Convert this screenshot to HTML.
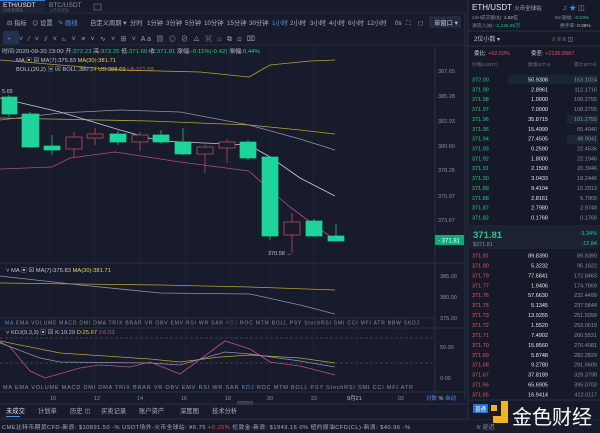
<!DOCTYPE html>
<html><head><meta charset="utf-8"><style>
html,body{margin:0;padding:0;background:#171b2b;width:600px;height:433px;overflow:hidden}
svg{display:block}
text{font-family:"Liberation Sans","Noto Sans CJK SC",sans-serif}
</style></head><body>
<svg width="600" height="433" viewBox="0 0 600 433" xmlns="http://www.w3.org/2000/svg">
<rect width="600" height="433" fill="#171b2b"/>
<rect x="0" y="0" width="45" height="12" fill="#1d2234"/>
<rect x="0" y="0" width="45" height="1" fill="#3b7de0"/>
<text x="3" y="7" font-size="6.5" fill="#e6e8ee">ETH/USDT</text>
<text x="3" y="11.5" font-size="4" fill="#6c7285">火币全球站</text>
<text x="49" y="7" font-size="6.5" fill="#8a90a0">BTC/USDT</text>
<text x="49" y="11.5" font-size="4" fill="#5c6275">火币全球站</text>
<rect x="94" y="4" width="7" height="6" fill="none" stroke="#6c7285" stroke-width="0.7"/>
<line x1="0" y1="13" x2="468" y2="13" stroke="#262b3d"/>
<g font-size="6.3" fill="#aab0c0">
<text x="7" y="25">⊟ 指标</text><text x="32" y="25">⊙ 设置</text><text x="58" y="25" fill="#4a8ff0">✎ 画线</text>
<text x="90" y="25">自定义周期 ▾</text><text x="130" y="25">分时</text><text x="147" y="25">1分钟</text><text x="166" y="25">3分钟</text><text x="185" y="25">5分钟</text><text x="204" y="25">10分钟</text><text x="227" y="25">15分钟</text><text x="249" y="25">30分钟</text><text x="272" y="25" fill="#4a8ff0">1小时</text><text x="290" y="25">2小时</text><text x="310" y="25">3小时</text><text x="329" y="25">4小时</text><text x="348" y="25">6小时</text><text x="367" y="25">12小时</text><text x="395" y="25">0s</text><text x="406" y="25">⛶</text><text x="418" y="25">◻</text>
</g>
<rect x="430" y="17" width="30" height="10" fill="#222840" stroke="#3a4058" stroke-width="0.6"/>
<text x="434" y="25" font-size="6.3" fill="#c8ccd8">单窗口 ▾</text>
<rect x="3" y="31" width="16" height="13" fill="#24304d"/>
<g font-size="7" fill="#9aa0b0">
<text x="7" y="41" fill="#4a8ff0">+</text><text x="19" y="41" textLength="236" lengthAdjust="spacing">˅ ⁄ ˅ ⫽ ˅ ◺ ˅ ≡ ˅ ∿ ˅ ⊞ ˅ Aa ▧ ◎ ⊘ ◬ ⌘ ⌂ ⧉ ⊡ ⌧</text>
</g>
<line x1="0" y1="45" x2="468" y2="45" stroke="#262b3d"/>
<text x="2" y="53" font-size="5.8" fill="#c0c4d0" textLength="258" lengthAdjust="spacingAndGlyphs">时间:2020-09-20 23:00 开:<tspan fill="#1fc78f">372.23</tspan> 高:<tspan fill="#1fc78f">373.25</tspan> 低:<tspan fill="#1fc78f">371.60</tspan> 收:<tspan fill="#1fc78f">371.81</tspan> 涨幅:<tspan fill="#1fc78f">-0.11%(-0.42)</tspan> 振幅:<tspan fill="#1fc78f">0.44%</tspan></text>
<text x="16" y="62" font-size="5.8" fill="#c0c4d0">MA ▣ ⊠ MA(7):375.83 <tspan fill="#e8d44d">MA(30):381.71</tspan></text>
<text x="16" y="71" font-size="5.8" fill="#c0c4d0">BOLL(20,2) ▣ ⊠ BOLL:380.14 <tspan fill="#e8d44d">UB:388.69</tspan> <tspan fill="#c9559a">LB:371.59</tspan></text>
<g stroke="#21263a" stroke-width="0.6">
<line x1="50" y1="46" x2="50" y2="390"/><line x1="95" y1="46" x2="95" y2="390"/><line x1="140" y1="46" x2="140" y2="390"/><line x1="185" y1="46" x2="185" y2="390"/><line x1="230" y1="46" x2="230" y2="390"/><line x1="270" y1="46" x2="270" y2="390"/><line x1="313" y1="46" x2="313" y2="390"/><line x1="357" y1="46" x2="357" y2="390"/><line x1="400" y1="46" x2="400" y2="390"/>
</g>
<line x1="435" y1="46" x2="435" y2="395" stroke="#2a2f44"/>
<line x1="465" y1="13" x2="465" y2="400" stroke="#2a2f44"/>
<g font-size="5.5" fill="#8a90a0">
<text x="438" y="73">387.65</text><text x="438" y="98">385.28</text><text x="438" y="123">382.93</text><text x="438" y="148">380.60</text><text x="438" y="172">378.28</text><text x="438" y="198">375.97</text><text x="438" y="222">373.67</text>
</g>
<rect x="435" y="235" width="29" height="10" fill="#0fa878"/>
<text x="438" y="242.5" font-size="6" fill="#ffffff">- 371.81</text>
<text x="2" y="93" font-size="5.5" fill="#c0c4d0">5.65</text>
<g fill="none" stroke-width="0.8">
<polyline stroke="#b8a235" points="0,60 120,70 200,72 249,77 270,65 310,61 335,60"/>
<polyline stroke="#8e93a6" points="0,120 60,113 120,110 180,112 249,125 300,139 335,150"/>
<polyline stroke="#b8a235" points="0,118 150,121 249,125 300,130 335,134"/>
<polyline stroke="#c8ccd6" points="0,98 60,112 120,130 160,141 249,145 270,157 300,178 335,196"/>
<polyline stroke="#b04a8e" points="0,169 52,167 70,158 115,152 180,162 249,171 270,190 290,207 320,229 335,240"/>
</g>
<g fill="#1fd49a" stroke="#1fd49a" stroke-width="0.7">
<line x1="9" y1="95" x2="9" y2="117"/><rect x="2" y="97" width="15" height="17"/>
<line x1="30" y1="112" x2="30" y2="148"/><rect x="22" y="114" width="17" height="33"/>
<line x1="52" y1="135" x2="52" y2="155"/><rect x="44" y="146" width="16" height="4"/>
<rect x="110" y="134" width="16" height="8"/><line x1="118" y1="131" x2="118" y2="145"/>
<line x1="161" y1="130" x2="161" y2="144"/><rect x="153" y="135" width="16" height="7"/>
<line x1="183" y1="128" x2="183" y2="155"/><rect x="175" y="142" width="16" height="12"/>
<line x1="248" y1="140" x2="248" y2="160"/><rect x="240" y="142" width="16" height="16"/>
<line x1="270" y1="156" x2="270" y2="240"/><rect x="262" y="157" width="16" height="79"/>
<line x1="314" y1="219" x2="314" y2="237"/><rect x="306" y="221" width="16" height="15"/>
<line x1="336" y1="224" x2="336" y2="242"/><rect x="328" y="236" width="16" height="5"/>
</g>
<g fill="none" stroke="#c24d5a" stroke-width="0.8">
<line x1="74" y1="132" x2="74" y2="157"/><rect x="66" y="137" width="16" height="12" fill="#171b2b"/>
<line x1="95" y1="128" x2="95" y2="145"/><rect x="87" y="134" width="16" height="4" fill="#171b2b"/>
<line x1="140" y1="132" x2="140" y2="151"/><rect x="132" y="135" width="16" height="7" fill="#171b2b"/>
<line x1="205" y1="145" x2="205" y2="173"/><rect x="197" y="147" width="16" height="7" fill="#171b2b"/>
<line x1="227" y1="139" x2="227" y2="163"/><rect x="219" y="142" width="16" height="6" fill="#171b2b"/>
<line x1="292" y1="213" x2="292" y2="253"/><rect x="284" y="222" width="16" height="13" fill="#171b2b"/>
</g>
<text x="268" y="255" font-size="5.5" fill="#c0c4d0">370.58 →</text>
<line x1="0" y1="263" x2="465" y2="263" stroke="#2a2f44"/>
<text x="6" y="272" font-size="5.8" fill="#c0c4d0">˅ MA ▣ ⊠ MA(7):375.83 <tspan fill="#e8d44d">MA(30):381.71</tspan></text>
<g font-size="5.5" fill="#8a90a0"><text x="440" y="278">385.00</text><text x="440" y="299">380.00</text><text x="440" y="320">375.00</text></g>
<polyline fill="none" stroke="#b8a235" stroke-width="0.8" points="0,283 160,285 250,287 335,290"/>
<polyline fill="none" stroke="#8e93a6" stroke-width="0.8" points="0,276 80,285 160,293 250,294 300,305 335,314"/>
<line x1="0" y1="318" x2="435" y2="318" stroke="#2a2f44"/>
<text x="5" y="324.5" font-size="5" fill="#8a90a0" textLength="414" lengthAdjust="spacing"><tspan fill="#4a8ff0">MA</tspan>  EMA  VOLUME  MACD  DMI  DMA  TRIX  BRAR  VR  OBV  EMV  RSI  WR  SAR  <tspan fill="#555b70">KDJ</tspan>  ROC  MTM  BOLL  PSY  StochRSI  SMI  CCI  MFI  ATR  BBW  SKDJ</text>
<line x1="0" y1="328" x2="465" y2="328" stroke="#2a2f44"/>
<text x="6" y="334" font-size="5.8" fill="#c0c4d0">˅ KDJ(9,3,3) ▣ ⊠ K:19.29 <tspan fill="#e8d44d">D:25.67</tspan> <tspan fill="#c9559a">J:6.53</tspan></text>
<line x1="0" y1="338" x2="435" y2="338" stroke="#3a3f54" stroke-dasharray="3,2"/>
<line x1="0" y1="363" x2="435" y2="363" stroke="#3a3f54" stroke-dasharray="3,2"/>
<g font-size="5.5" fill="#8a90a0"><text x="440" y="349">50.00</text><text x="440" y="380">0.00</text></g>
<g fill="none" stroke-width="0.8">
<polyline stroke="#c04a98" points="0,342 10,347 30,371 45,378 80,368 100,365 130,367 150,362 180,374 225,341 250,349 270,362 300,366 335,375"/>
<polyline stroke="#b8a235" points="0,341 60,353 150,359 180,362 220,357 250,355 300,358 335,363"/>
<polyline stroke="#8e93a6" points="0,343 40,358 60,362 150,363 180,365 225,352 250,354 300,361 335,367"/>
</g>
<text x="3" y="389" font-size="5.5" fill="#8a90a0" textLength="410" lengthAdjust="spacing">MA  EMA  VOLUME  MACD  DMI  DMA  TRIX  BRAR  VR  OBV  EMV  RSI  WR  SAR  <tspan fill="#4a8ff0">KDJ</tspan>  ROC  MTM  BOLL  PSY  StochRSI  SMI  CCI  MFI  ATR</text>
<line x1="0" y1="392" x2="465" y2="392" stroke="#2a2f44"/>
<g font-size="5.5" fill="#8a90a0"><text x="50" y="400">10</text><text x="94" y="400">12</text><text x="137" y="400">14</text><text x="181" y="400">16</text><text x="225" y="400">18</text><text x="267" y="400">20</text><text x="311" y="400">22</text><text x="347" y="400" fill="#c0c4d0">9月21</text><text x="398" y="400">02</text><text x="426" y="400" fill="#4a8ff0">对数 <tspan fill="#c0c4d0">%</tspan> 自动</text></g>
<rect x="237" y="401" width="16" height="4" fill="#3a4058"/>
<line x1="0" y1="404" x2="468" y2="404" stroke="#2a2f44"/>
<g font-size="6.3" fill="#aab0c0"><text x="6" y="413" fill="#e0e3ea">未成交</text><text x="38" y="413">计划单</text><text x="70" y="413">历史 ◫</text><text x="101" y="413">买卖记录</text><text x="139" y="413">账户资产</text><text x="180" y="413">深度图</text><text x="212" y="413">技术分析</text></g>
<rect x="6" y="416" width="14" height="1" fill="#4a8ff0"/>
<line x1="0" y1="419" x2="600" y2="419" stroke="#2a2f44"/>
<text x="2" y="429" font-size="5.7" fill="#aab0c0" textLength="408" lengthAdjust="spacing">CME比特币期货CFD-新浪: $10891.50 -%     USDT场外-火币全球站: ¥6.75 <tspan fill="#e8485a">+0.15%</tspan>     伦敦金-新浪: $1949.16 0%     纽约原油CFD(CL)-新浪: $40.96 -%</text>

<rect x="468" y="0" width="132" height="419" fill="#161a28"/>
<line x1="468" y1="0" x2="468" y2="419" stroke="#2a2f44"/>
<text x="472" y="10" font-size="8" fill="#e6e8ee">ETH/USDT <tspan font-size="5.5" fill="#aab0c0">火币全球站</tspan></text>
<text x="562" y="10" font-size="7" fill="#8a90a0">♫ <tspan fill="#4a8ff0">★</tspan> ◫</text>
<text x="472" y="19" font-size="4.8" fill="#8a90a0">24H成交额($): <tspan fill="#c0c4d0">1.52亿</tspan></text>
<text x="555" y="19" font-size="4.8" fill="#8a90a0">5m涨幅: <tspan fill="#1fc78f">-0.10%</tspan></text>
<text x="472" y="27" font-size="4.8" fill="#8a90a0">净流入($): <tspan fill="#1fc78f">-1,125.91万</tspan></text>
<text x="560" y="27" font-size="4.8" fill="#8a90a0">换手率: <tspan fill="#c0c4d0">0.36%</tspan></text>
<line x1="468" y1="31" x2="600" y2="31" stroke="#2a2f44"/>
<text x="474" y="41" font-size="6" fill="#c0c4d0">2位小数 ▾</text>
<text x="552" y="41" font-size="6" fill="#8a90a0"><tspan fill="#c24d5a">≡</tspan> <tspan fill="#1fc78f">≡</tspan> ≡ ◫</text>
<line x1="468" y1="46" x2="600" y2="46" stroke="#2a2f44"/>
<text x="474" y="55" font-size="5.5" fill="#c0c4d0">委比: <tspan fill="#e8485a">+62.03%</tspan></text>
<text x="531" y="55" font-size="5.5" fill="#c0c4d0">委差: <tspan fill="#e8485a">+2136.8987</tspan></text>
<g font-size="4.8" fill="#6c7285"><text x="472" y="66">价格(USDT)</text><text x="528" y="66">数量(ETH)</text><text x="574" y="66">累计(ETH)</text></g>
<g fill="#1b2634">
<rect x="508" y="75" width="90" height="9"/><rect x="567" y="115" width="31" height="9"/><rect x="567" y="135" width="31" height="9"/>
</g>
<g font-size="5.5">
<g fill="#1fc78f">
<text x="472" y="81.5">372.00</text><text x="472" y="91.4">371.99</text><text x="472" y="101.2">371.98</text><text x="472" y="111.1">371.97</text><text x="472" y="121">371.96</text><text x="472" y="130.8">371.95</text><text x="472" y="140.7">371.94</text><text x="472" y="150.5">371.93</text><text x="472" y="160.4">371.92</text><text x="472" y="170.2">371.91</text><text x="472" y="180.1">371.90</text><text x="472" y="190">371.89</text><text x="472" y="199.8">371.88</text><text x="472" y="209.7">371.87</text><text x="472" y="219.5">371.82</text>
</g>
<g fill="#e6e8ee" text-anchor="end">
<text x="548" y="81.5">50.9308</text><text x="548" y="91.4">2.8961</text><text x="548" y="101.2">1.0000</text><text x="548" y="111.1">7.0000</text><text x="548" y="121">35.8715</text><text x="548" y="130.8">15.4999</text><text x="548" y="140.7">27.4505</text><text x="548" y="150.5">0.2590</text><text x="548" y="160.4">1.8000</text><text x="548" y="170.2">2.1500</text><text x="548" y="180.1">3.0433</text><text x="548" y="190">9.4104</text><text x="548" y="199.8">2.8161</text><text x="548" y="209.7">2.7980</text><text x="548" y="219.5">0.1768</text>
</g>
<g fill="#8a90a0" text-anchor="end">
<text x="597" y="81.5">163.1024</text><text x="597" y="91.4">112.1716</text><text x="597" y="101.2">109.2755</text><text x="597" y="111.1">108.2755</text><text x="597" y="121">101.2755</text><text x="597" y="130.8">65.4040</text><text x="597" y="140.7">49.9041</text><text x="597" y="150.5">22.4536</text><text x="597" y="160.4">22.1946</text><text x="597" y="170.2">20.3946</text><text x="597" y="180.1">18.2446</text><text x="597" y="190">15.2013</text><text x="597" y="199.8">5.7909</text><text x="597" y="209.7">2.9748</text><text x="597" y="219.5">0.1768</text>
</g>
</g>
<rect x="468" y="225" width="132" height="24" fill="#1d2233"/>
<text x="473" y="238" font-size="9.5" font-weight="bold" fill="#1fc78f">371.81</text>
<text x="473" y="246" font-size="5.5" fill="#8a90a0">$371.81</text>
<text x="597" y="235" font-size="5.5" fill="#1fc78f" text-anchor="end">-3.34%</text>
<text x="597" y="245" font-size="5.5" fill="#1fc78f" text-anchor="end">-12.84</text>
<g font-size="5.5">
<g fill="#e0566a">
<text x="472" y="257.5">371.81</text><text x="472" y="267.4">371.80</text><text x="472" y="277.4">371.79</text><text x="472" y="287.3">371.77</text><text x="472" y="297.2">371.76</text><text x="472" y="307.2">371.75</text><text x="472" y="317.1">371.73</text><text x="472" y="327">371.72</text><text x="472" y="337">371.71</text><text x="472" y="346.9">371.70</text><text x="472" y="356.8">371.69</text><text x="472" y="366.7">371.68</text><text x="472" y="376.7">371.67</text><text x="472" y="386.6">371.66</text><text x="472" y="396.5">371.65</text>
</g>
<g fill="#e6e8ee" text-anchor="end">
<text x="548" y="257.5">89.8390</text><text x="548" y="267.4">5.3232</text><text x="548" y="277.4">77.6841</text><text x="548" y="287.3">1.9406</text><text x="548" y="297.2">57.6630</text><text x="548" y="307.2">5.1345</text><text x="548" y="317.1">13.9255</text><text x="548" y="327">1.5520</text><text x="548" y="337">7.4902</text><text x="548" y="346.9">15.8560</text><text x="548" y="356.8">5.8748</text><text x="548" y="366.7">9.2780</text><text x="548" y="376.7">37.8189</text><text x="548" y="386.6">65.6905</text><text x="548" y="396.5">16.9414</text>
</g>
<g fill="#8a90a0" text-anchor="end">
<text x="597" y="257.5">89.8390</text><text x="597" y="267.4">95.1622</text><text x="597" y="277.4">172.8463</text><text x="597" y="287.3">174.7869</text><text x="597" y="297.2">232.4499</text><text x="597" y="307.2">237.5844</text><text x="597" y="317.1">251.5099</text><text x="597" y="327">253.0619</text><text x="597" y="337">260.5521</text><text x="597" y="346.9">276.4081</text><text x="597" y="356.8">282.2829</text><text x="597" y="366.7">291.5609</text><text x="597" y="376.7">329.3798</text><text x="597" y="386.6">395.0703</text><text x="597" y="396.5">412.0117</text>
</g>
</g>
<line x1="468" y1="400" x2="600" y2="400" stroke="#2a2f44"/>
<rect x="473" y="404" width="15" height="9" fill="#2a6fd6"/>
<text x="475" y="411" font-size="5.5" fill="#fff">普通</text>
<text x="476" y="429" font-size="6" fill="#8a90a0">≋ 延迟</text>
<rect x="491" y="405" width="6" height="6" fill="#f0b323"/>
<path d="M501 401 h7 v22 h-15 v-7 h8 z" fill="#f0b323"/>
<text x="512" y="424" font-size="20" fill="#ffffff">金色财经</text>
</svg>
</body></html>
